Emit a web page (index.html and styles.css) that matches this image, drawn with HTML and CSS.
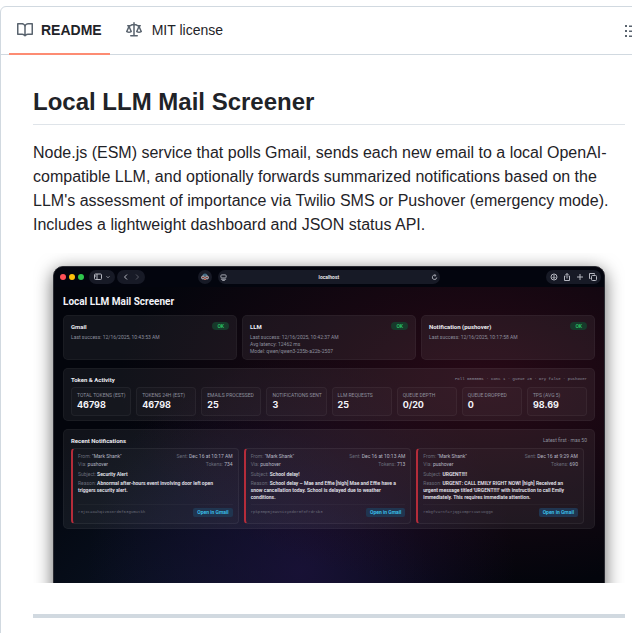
FILE: index.html
```
<!DOCTYPE html>
<html lang="en">
<head>
    <meta charset="UTF-8">
    <meta name="viewport" content="width=device-width, initial-scale=1.0">
    <title>Local LLM Mail Screener</title>
    <link rel="stylesheet" href="styles.css">
</head>
<body>
    <div class="readme-box">
        <div class="readme-nav">
            <nav class="tabs">
                <a href="#readme" class="tab active">
                    <svg width="16" height="16" viewBox="0 0 16 16"><path d="M0 1.75A.75.75 0 0 1 .75 1h4.253c1.227 0 2.317.59 3 1.501A3.743 3.743 0 0 1 11.006 1h4.245a.75.75 0 0 1 .75.75v10.5a.75.75 0 0 1-.75.75h-4.507a2.25 2.25 0 0 0-1.591.659l-.622.621a.75.75 0 0 1-1.06 0l-.622-.621A2.25 2.25 0 0 0 5.258 13H.75a.75.75 0 0 1-.75-.75Zm7.251 10.324.004-5.073-.002-2.253A2.25 2.25 0 0 0 5.003 2.5H1.5v9h3.757a3.75 3.75 0 0 1 1.994.574ZM8.755 4.75l-.004 7.322a3.752 3.752 0 0 1 1.992-.572H14.5v-9h-3.495a2.25 2.25 0 0 0-2.25 2.25Z"/></svg>
                    <span>README</span>
                </a>
                <a href="#license" class="tab">
                    <svg width="16" height="16" viewBox="0 0 16 16"><path d="M8.75.75V2h.985c.304 0 .603.08.867.231l1.29.736c.038.022.08.033.124.033h2.234a.75.75 0 0 1 0 1.5h-.427l2.111 4.692a.75.75 0 0 1-.154.838c-.21.21-.5.4-.793.545C14.556 10.78 13.88 11 13 11a4.498 4.498 0 0 1-2.023-.454 3.544 3.544 0 0 1-.757-.516.75.75 0 0 1-.154-.838L12.178 4.5h-.162c-.305 0-.604-.079-.868-.231l-1.29-.736a.245.245 0 0 0-.124-.033H8.75V13h2.5a.75.75 0 0 1 0 1.5h-6.5a.75.75 0 0 1 0-1.5h2.5V3.5h-.984a.245.245 0 0 0-.124.033l-1.289.737c-.265.15-.564.23-.869.23h-.162l2.112 4.692a.75.75 0 0 1-.154.838c-.21.21-.5.4-.793.545C4.556 10.78 3.88 11 3 11a4.498 4.498 0 0 1-2.023-.454 3.544 3.544 0 0 1-.757-.516.75.75 0 0 1-.154-.838L2.178 4.5H1.75a.75.75 0 0 1 0-1.5h2.234a.249.249 0 0 0 .125-.033l1.288-.737c.265-.15.564-.23.869-.23h.984V.75a.75.75 0 0 1 1.5 0Zm2.945 8.477c.285.135.718.273 1.305.273s1.02-.138 1.305-.273L13 6.327Zm-10 0c.285.135.718.273 1.305.273s1.02-.138 1.305-.273L3 6.327Z"/></svg>
                    <span>MIT license</span>
                </a>
            </nav>
            <button class="outline-btn" aria-label="Outline">
                <svg width="16" height="16" viewBox="0 0 16 16"><path d="M5 2.500h10V4H5zM5 7.500h10V9H5zM5 12.500h10V14H5zM1 2h2v2H1zM1 7h2v2H1zM1 12h2v2H1z"/></svg>
            </button>
        </div>

        <article class="readme">
            <h1>Local LLM Mail Screener</h1>
            <p>Node.js (ESM) service that polls Gmail, sends each new email to a local OpenAI-compatible LLM, and optionally forwards summarized notifications based on the LLM's assessment of importance via Twilio SMS or Pushover (emergency mode). Includes a lightweight dashboard and JSON status API.</p>

            <div class="shot">
                <div class="window">
                    <div class="toolbar">
                        <div class="lights"><i class="red"></i><i class="yellow"></i><i class="green"></i></div>
                        <div class="pill">
                            <svg width="8" height="8" viewBox="0 0 16 16"><rect x="1" y="2" width="14" height="11" rx="2"/><path d="M6 2v11M3 5h1M3 7h1"/></svg>
                            <svg width="6" height="6" viewBox="0 0 16 16"><path d="M4 6l4 4 4-4"/></svg>
                        </div>
                        <div class="pill nav-pill">
                            <svg width="8" height="8" viewBox="0 0 16 16"><path d="M10 3L5 8l5 5"/></svg>
                            <svg class="dim" width="8" height="8" viewBox="0 0 16 16"><path d="M6 3l5 5-5 5"/></svg>
                        </div>
                        <div class="avatar">
                            <svg width="8" height="8" viewBox="0 0 16 16"><path d="M3 6a5 5 0 0 1 10 0z" fill="#426b83" stroke="none"/><circle cx="4" cy="9" r="3" fill="#7a4a44"/><circle cx="12" cy="9" r="3" fill="#7a4a44"/><path d="M7 9h2M6 13h4" stroke="#c76a5d"/></svg>
                        </div>
                        <div class="address">
                            <svg width="7" height="7" viewBox="0 0 16 16"><rect x="2" y="2" width="12" height="7" rx="2"/><path d="M2 12h12M5 15h6"/></svg>
                            <span>localhost</span>
                            <svg width="7" height="7" viewBox="0 0 16 16"><path d="M13 8a5 5 0 1 1-3-5M8 1l3 2-2 3"/></svg>
                        </div>
                        <div class="pill tools">
                            <svg width="8" height="8" viewBox="0 0 16 16"><circle cx="8" cy="8" r="6"/><path d="M8 4v7M5 8l3 3 3-3"/></svg>
                            <svg width="8" height="8" viewBox="0 0 16 16"><path d="M5 6H3v9h10V6h-2M8 11V1M5 4l3-3 3 3"/></svg>
                            <svg width="8" height="8" viewBox="0 0 16 16"><path d="M8 2v12M2 8h12"/></svg>
                            <svg width="8" height="8" viewBox="0 0 16 16"><rect x="5" y="5" width="10" height="10" rx="2"/><path d="M3 11H1V1h10v2"/></svg>
                        </div>
                    </div>

                    <div class="dashboard">
                        <h2>Local LLM Mail Screener</h2>

                        <div class="status-grid">
                            <section class="card">
                                <div class="card-head"><h3>Gmail</h3><span class="badge">OK</span></div>
                                <div>Last success: 12/16/2025, 10:43:53 AM</div>
                            </section>
                            <section class="card">
                                <div class="card-head"><h3>LLM</h3><span class="badge">OK</span></div>
                                <div>Last success: 12/16/2025, 10:42:37 AM</div>
                                <div>Avg latency: 12462 ms</div>
                                <div>Model: qwen/qwen3-235b-a22b-2507</div>
                            </section>
                            <section class="card">
                                <div class="card-head"><h3>Notification (pushover)</h3><span class="badge">OK</span></div>
                                <div>Last success: 12/16/2025, 10:17:58 AM</div>
                            </section>
                        </div>

                        <section class="card">
                            <div class="card-head"><h3>Token &amp; Activity</h3><span class="mono">Poll 60000ms · Conc 1 · Queue 20 · Dry false · pushover</span></div>
                            <div class="stats">
                                <div class="stat"><span>TOTAL TOKENS (EST)</span><b>46798</b></div>
                                <div class="stat"><span>TOKENS 24H (EST)</span><b>46798</b></div>
                                <div class="stat"><span>EMAILS PROCESSED</span><b>25</b></div>
                                <div class="stat"><span>NOTIFICATIONS SENT</span><b>3</b></div>
                                <div class="stat"><span>LLM REQUESTS</span><b>25</b></div>
                                <div class="stat"><span>QUEUE DEPTH</span><b>0/20</b></div>
                                <div class="stat"><span>QUEUE DROPPED</span><b>0</b></div>
                                <div class="stat"><span>TPS (AVG 5)</span><b>98.69</b></div>
                            </div>
                        </section>

                        <section class="card">
                            <div class="card-head"><h3>Recent Notifications</h3><span>Latest first · max 50</span></div>
                            <div class="notes">
                                <div class="note">
                                    <div class="row"><span>From: <em>"Mark Shank"</em></span><span>Sent: <em>Dec 16 at 10:17 AM</em></span></div>
                                    <div class="row"><span>Via: <em>pushover</em></span><span>Tokens: <em>734</em></span></div>
                                    <div class="subject">Subject: <strong>Security Alert</strong></div>
                                    <div class="reason">Reason: <strong>Abnormal after-hours event involving door left open<br>triggers security alert.</strong></div>
                                    <div class="note-foot"><span class="mono">r3jxcaoahqiv6x8rd5f63gumutkh</span><a href="#gmail">Open in Gmail</a></div>
                                </div>
                                <div class="note">
                                    <div class="row"><span>From: <em>"Mark Shank"</em></span><span>Sent: <em>Dec 16 at 10:13 AM</em></span></div>
                                    <div class="row"><span>Via: <em>pushover</em></span><span>Tokens: <em>713</em></span></div>
                                    <div class="subject">Subject: <strong>School delay!</strong></div>
                                    <div class="reason">Reason: <strong>School delay – Mae and Effie [high] Mae and Effie have a<br>snow cancellation today. School is delayed due to weather<br>conditions.</strong></div>
                                    <div class="note-foot"><span class="mono">rpkp3mpmj6wvnixy8d8r0f8frdrsb3</span><a href="#gmail">Open in Gmail</a></div>
                                </div>
                                <div class="note">
                                    <div class="row"><span>From: <em>"Mark Shank"</em></span><span>Sent: <em>Dec 16 at 9:29 AM</em></span></div>
                                    <div class="row"><span>Via: <em>pushover</em></span><span>Tokens: <em>690</em></span></div>
                                    <div class="subject">Subject: <strong>URGENT!!!!</strong></div>
                                    <div class="reason">Reason: <strong>URGENT: CALL EMILY RIGHT NOW! [high] Received an<br>urgent message titled 'URGENT!!!!' with instruction to call Emily<br>immediately. This requires immediate attention.</strong></div>
                                    <div class="note-foot"><span class="mono">rmbgfvarnfa7jqgixmprtuwtuogg8</span><a href="#gmail">Open in Gmail</a></div>
                                </div>
                            </div>
                        </section>
                    </div>
                </div>
            </div>

            <hr>
        </article>
    </div>
</body>
</html>
```
FILE: styles.css
```
* {
    box-sizing: border-box;
}

body {
    margin: 0;
    overflow: hidden;
    background: #fff;
    color: #1f2328;
    font-family: "Liberation Sans", Arial, sans-serif;
}

/* the box runs past the right side of the window */
.readme-box {
    width: calc(100% + 26px);
    margin-top: 6px;
    border: 1px solid #d1d9e0;
    border-radius: 6px;
}

.readme-nav {
    display: flex;
    justify-content: space-between;
    align-items: center;
    height: 48px;
    padding: 0 9px 0 8px;
    border-bottom: 1px solid #d1d9e0;
}

.tabs {
    display: flex;
    gap: 8px;
    align-self: stretch;
}

.tab {
    display: flex;
    align-items: center;
    gap: 8px;
    height: 48px;
    padding: 0 8px;
    border-bottom: 2px solid transparent;
    color: #1f2328;
    font-size: 14px;
    text-decoration: none;
}

.tab span {
    padding: 0 2px;
}

.tab.active {
    border-bottom-color: #fd8c73;
    font-weight: bold;
}

.tab.active span {
    padding: 0;
}

.tab svg,
.outline-btn svg {
    fill: #59636e;
}

.outline-btn {
    display: flex;
    padding: 8px;
    border: none;
    background: none;
}

/* readme text */
.readme {
    padding: 32px;
}

.readme h1 {
    margin: 0 0 16px;
    padding-bottom: 7px;
    border-bottom: 1px solid #d1d9e0b3;
    font-size: 24px;
    line-height: 30px;
}

.readme p {
    margin: 0 0 16px;
    font-size: 16px;
    line-height: 24px;
}

.readme hr {
    height: 4px;
    margin: 31px 0 24px;
    border: none;
    background: #d1d9e0;
}

/* browser window with the dashboard */
.shot {
    height: 330px;
    padding: 13px 20px 0;
    overflow: hidden;
}

.window {
    height: 360px;
    border: 1px solid #2b2c33;
    border-radius: 10px 10px 0 0;
    background:
        radial-gradient(ellipse at 78% 32%, rgba(46, 10, 24, 0.85), transparent 60%),
        radial-gradient(ellipse at 45% 85%, rgba(27, 18, 58, 0.85), transparent 50%),
        radial-gradient(ellipse at 25% 110%, rgba(14, 30, 54, 0.7), transparent 45%),
        #03050c;
    box-shadow: 0 4px 18px rgba(0, 0, 0, 0.6);
    color: #8d8f9d;
    font-family: Roboto, sans-serif;
    font-size: 5px;
    line-height: 7px;
}

.toolbar {
    display: flex;
    align-items: center;
    height: 20px;
    padding: 0 3px 0 6px;
    border-radius: 9px 9px 0 0;
    background: #03050e;
}

.toolbar svg {
    fill: none;
    stroke: #b5b7c0;
    stroke-width: 2;
}

.toolbar .dim {
    opacity: 0.4;
}

.lights {
    display: flex;
    gap: 3px;
    margin-right: 5px;
}

.lights i {
    width: 6px;
    height: 6px;
    border-radius: 50%;
}

.red { background: #ff5157; }
.yellow { background: #fdc00a; }
.green { background: #2fc64c; }

.pill {
    display: flex;
    align-items: center;
    justify-content: space-around;
    width: 26px;
    height: 14px;
    padding: 0 3px;
    border-radius: 7px;
    background: #171a26;
}

.nav-pill {
    width: 28px;
    margin-left: 2px;
}

.avatar {
    display: flex;
    align-items: center;
    justify-content: center;
    width: 14px;
    height: 14px;
    margin-left: 53px;
    border-radius: 50%;
    background: #171a26;
}

.address {
    display: flex;
    align-items: center;
    justify-content: space-between;
    width: 41%;
    height: 14px;
    margin: 0 auto 0 6px;
    padding: 0 2px;
    border-radius: 7px;
    background: #171a26;
    color: #f0f0f4;
    font-weight: 600;
}

.tools {
    width: 55px;
    padding: 0 2px;
}

.dashboard {
    display: flex;
    flex-direction: column;
    gap: 8px;
    padding: 10px 9px;
}

.dashboard h2 {
    margin: 0;
    color: #f3f3f8;
    font-size: 10px;
    font-weight: 700;
    line-height: 10px;
}

.status-grid {
    display: grid;
    grid-template-columns: repeat(3, 1fr);
    gap: 5px;
}

.card {
    padding: 6px 7px 4px;
    border: 1px solid rgba(255, 255, 255, 0.04);
    border-radius: 5px;
    background: rgba(255, 255, 255, 0.06);
}

.status-grid .card {
    min-height: 45px;
}

.card-head {
    display: flex;
    align-items: center;
    justify-content: space-between;
    height: 8px;
    margin-bottom: 4px;
}

.card-head h3 {
    margin: 0;
    color: #ececf2;
    font-size: 6px;
    font-weight: 700;
}

.badge {
    padding: 0 5px;
    border-radius: 4px;
    background: #173a2b;
    color: #2bc568;
    font-weight: 600;
    line-height: 8px;
}

.mono {
    font-family: "Liberation Mono", monospace;
    font-size: 4px;
}

.stats {
    display: grid;
    grid-template-columns: repeat(8, minmax(0, 1fr));
    gap: 5px;
}

.stat {
    display: flex;
    flex-direction: column;
    height: 29px;
    padding: 4px 5px;
    border: 1px solid rgba(255, 255, 255, 0.05);
    border-radius: 4px;
    background: rgba(255, 255, 255, 0.02);
    white-space: nowrap;
}

.stat b {
    color: #f3f3f8;
    font-family: Inter, sans-serif;
    font-size: 9px;
    line-height: 12px;
}

.notes {
    display: grid;
    grid-template-columns: repeat(3, minmax(0, 1fr));
    gap: 5px;
    padding-right: 3px;
}

.note {
    display: flex;
    flex-direction: column;
    height: 76px;
    padding: 4px 5px 6px;
    border: 1px solid rgba(255, 255, 255, 0.06);
    border-left: 2px solid #b52c3a;
    border-radius: 4px;
    background: rgba(255, 255, 255, 0.02);
    color: #696b79;
    white-space: nowrap;
}

.row {
    display: flex;
    justify-content: space-between;
    height: 8px;
}

.note em {
    color: #b5b7c3;
    font-style: normal;
}

.note strong {
    color: #e4e4ec;
    font-weight: 600;
}

.subject {
    margin: 2px 0;
}

.note-foot {
    display: flex;
    align-items: center;
    justify-content: space-between;
    margin-top: auto;
    padding-top: 3px;
    border-top: 1px solid rgba(255, 255, 255, 0.03);
}

.note-foot a {
    padding: 0 4px;
    border-radius: 2px;
    background: #203550;
    color: #3cc4ee;
    font-weight: 600;
    line-height: 9px;
    text-decoration: none;
}
```
